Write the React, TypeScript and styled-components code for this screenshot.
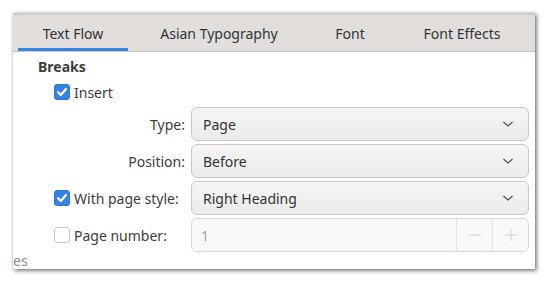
import React from 'react'
import styled, { createGlobalStyle } from 'styled-components'

const Global = createGlobalStyle`
  html, body {
    margin: 0;
    padding: 0;
    background: #ffffff;
  }
  body {
    font-family: 'Noto Sans', 'Open Sans', sans-serif;
    font-size: 14px;
    color: #3d3d3d;
  }
`

const Page = styled.div`
  width: 548px;
  height: 283px;
  padding: 13px 0 0 13px;
  box-sizing: border-box;
`

const Window = styled.div`
  width: 522px;
  height: 256px;
  background: #ffffff;
  display: flex;
  flex-direction: column;
  box-shadow: 2px 2px 4px rgba(0, 0, 0, 0.45), 0 0 3px rgba(0, 0, 0, 0.25);
  overflow: hidden;
`

const TabBar = styled.div`
  display: flex;
  height: 39px;
  padding-left: 5px;
  background: #e1dedb;
  border-top: 2px solid #cfcbc7;
  border-bottom: 1px solid #cdc7c2;
  box-sizing: border-box;
`

const Tab = styled.div<{ $w: number; $active?: boolean }>`
  width: ${p => p.$w}px;
  display: flex;
  align-items: center;
  justify-content: center;
  color: #2e3436;
  box-shadow: ${p => (p.$active ? 'inset 0 -3px 0 #3584e4' : 'none')};
`

const Body = styled.div`
  flex: 1;
  display: flex;
  flex-direction: column;
  padding: 5px 0 0 25px;
`

const Heading = styled.div`
  font-weight: bold;
  height: 20px;
  line-height: 20px;
`

const Grid = styled.div`
  display: grid;
  grid-template-columns: 137px 338px;
  row-gap: 3px;
  padding-left: 16px;
  margin-top: 5px;
`

const CheckRow = styled.label`
  display: flex;
  align-items: center;
  gap: 4px;
  height: 20px;
  grid-column: 1 / 3;
  margin-bottom: 2px;
`

const CheckCell = styled.label`
  display: flex;
  align-items: center;
  gap: 4px;
  height: 34px;
`

const Box = styled.span<{ $checked?: boolean }>`
  width: 16px;
  height: 16px;
  box-sizing: border-box;
  border-radius: 3px;
  display: inline-flex;
  align-items: center;
  justify-content: center;
  background: ${p => (p.$checked ? '#3584e4' : '#ffffff')};
  border: 1px solid ${p => (p.$checked ? '#2f78cf' : '#cdc7c2')};
`

const Label = styled.span`
  display: flex;
  align-items: center;
  justify-content: flex-end;
  height: 34px;
  padding-right: 6px;
`

const Combo = styled.div`
  height: 34px;
  box-sizing: border-box;
  border: 1px solid #cdc7c2;
  border-radius: 6px;
  background: linear-gradient(#f6f5f4, #edebe9);
  display: flex;
  align-items: center;
  padding: 0 14px 0 11px;
  color: #2e3436;
`

const ComboText = styled.span`
  flex: 1;
`

const Spin = styled.div`
  height: 34px;
  box-sizing: border-box;
  border: 1px solid #dcd8d5;
  border-radius: 6px;
  background: #faf9f8;
  display: flex;
  color: #a5a3a1;
`

const SpinValue = styled.span`
  flex: 1;
  display: flex;
  align-items: center;
  padding-left: 9px;
`

const SpinButton = styled.span`
  width: 35px;
  border-left: 1px solid #e4e1de;
  display: flex;
  align-items: center;
  justify-content: center;
`

const Footer = styled.div`
  margin-top: auto;
  margin-left: -25px;
  height: 14px;
  line-height: 12px;
  color: #8c8c8c;
`

const Check = () => (
  <svg width="12" height="12" viewBox="0 0 12 12">
    <path d="M2 6.2 L4.8 9 L10 3" fill="none" stroke="#fff" strokeWidth="2.2" strokeLinecap="round" strokeLinejoin="round" />
  </svg>
)

const Chevron = () => (
  <svg width="12" height="8" viewBox="0 0 12 8">
    <path d="M1.5 2 L6 6 L10.5 2" fill="none" stroke="#4a4a4a" strokeWidth="1.1" />
  </svg>
)

const App = () => (
  <Page>
    <Global />
    <Window>
      <TabBar>
        <Tab $w={110} $active>Text Flow</Tab>
        <Tab $w={182}>Asian Typography</Tab>
        <Tab $w={80}>Font</Tab>
        <Tab $w={144}>Font Effects</Tab>
      </TabBar>
      <Body>
        <Heading>Breaks</Heading>
        <Grid>
          <CheckRow>
            <Box $checked><Check /></Box>
            Insert
          </CheckRow>
          <Label>Type:</Label>
          <Combo><ComboText>Page</ComboText><Chevron /></Combo>
          <Label>Position:</Label>
          <Combo><ComboText>Before</ComboText><Chevron /></Combo>
          <CheckCell>
            <Box $checked><Check /></Box>
            With page style:
          </CheckCell>
          <Combo><ComboText>Right Heading</ComboText><Chevron /></Combo>
          <CheckCell>
            <Box />
            Page number:
          </CheckCell>
          <Spin>
            <SpinValue>1</SpinValue>
            <SpinButton>
              <svg width="14" height="14" viewBox="0 0 14 14"><path d="M1 7 H13" stroke="#d2cfcc" strokeWidth="1" /></svg>
            </SpinButton>
            <SpinButton>
              <svg width="14" height="14" viewBox="0 0 14 14"><path d="M1 7 H13 M7 1 V13" stroke="#d2cfcc" strokeWidth="1" /></svg>
            </SpinButton>
          </Spin>
        </Grid>
        <Footer>es</Footer>
      </Body>
    </Window>
  </Page>
)

export default App
